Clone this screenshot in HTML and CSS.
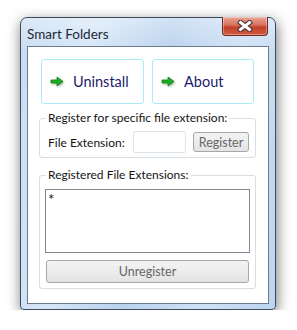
FILE: index.html
```html
<!DOCTYPE html>
<html lang="en">
<head>
  <meta charset="UTF-8">
  <title>Smart Folders</title>
  <link rel="stylesheet" href="styles.css">
</head>
<body>
  <div class="window">
    <div class="title-bar">
      <span class="title">Smart Folders</span>
      <button class="close-btn" aria-label="Close">
        <svg width="16" height="12" viewBox="0 0 16 12">
          <path d="M3.5 2.5 L12.5 9.5 M12.5 2.5 L3.5 9.5" stroke="#40302e" stroke-width="5" stroke-linecap="square"/>
          <path d="M3.5 2.5 L12.5 9.5 M12.5 2.5 L3.5 9.5" stroke="#ffffff" stroke-width="3" stroke-linecap="square"/>
        </svg>
      </button>
    </div>

    <div class="client">
      <div class="command-row">
        <button class="command-btn">
          <svg class="arrow" width="14" height="11" viewBox="0 0 14 11">
            <path d="M1 4 H7 V1 L13 5.5 L7 10 V7 H1 Z" fill="#1fae22" stroke="#138016" stroke-width="0.8"/>
          </svg>
          <span>Uninstall</span>
        </button>
        <button class="command-btn">
          <svg class="arrow" width="14" height="11" viewBox="0 0 14 11">
            <path d="M1 4 H7 V1 L13 5.5 L7 10 V7 H1 Z" fill="#1fae22" stroke="#138016" stroke-width="0.8"/>
          </svg>
          <span>About</span>
        </button>
      </div>

      <fieldset class="group group-register">
        <legend>Register for specific file extension:</legend>
        <div class="ext-row">
          <label for="ext">File Extension:</label>
          <input type="text" id="ext" class="ext-input">
          <button class="win-btn register-btn">Register</button>
        </div>
      </fieldset>

      <fieldset class="group group-list">
        <legend>Registered File Extensions:</legend>
        <div class="listbox">
          <div class="list-item">*</div>
        </div>
        <button class="win-btn unregister-btn">Unregister</button>
      </fieldset>
    </div>
  </div>
</body>
</html>
```

FILE: styles.css
```css
* {
  margin: 0;
  padding: 0;
  box-sizing: border-box;
}

body {
  background: #ffffff;
  font-family: Lato, "Noto Sans", sans-serif;
  font-size: 12px;
  color: #141414;
  padding: 17px 0 0 20px;
}

.window {
  position: relative;
  width: 256px;
  height: 293px;
  padding: 0 6px 5px 6px;
  border: 1px solid #3c4b5e;
  border-radius: 7px 7px 4px 4px;
  background:
    linear-gradient(180deg, rgba(255, 255, 255, 0.35) 0%, rgba(255, 255, 255, 0) 12%),
    linear-gradient(100deg, #c8dcf2 0%, #d6e6f7 25%, #b9d2ee 50%, #cfe1f5 75%, #bcd4ef 100%);
  box-shadow: 1px 4px 14px rgba(0, 0, 0, 0.55);
  display: flex;
  flex-direction: column;
}

.title-bar {
  height: 28px;
  display: flex;
  align-items: center;
}

.title {
  margin-top: 3px;
  font-size: 13.5px;
  color: #1e2a3a;
}

.close-btn {
  position: absolute;
  top: -1px;
  right: 7px;
  width: 46px;
  height: 19px;
  border: 1px solid #6e2a22;
  border-top: none;
  border-radius: 0 0 4px 4px;
  background: linear-gradient(180deg, #e9a597 0%, #d9715e 45%, #c2412a 55%, #d1583e 100%);
  box-shadow: inset 0 0 0 1px rgba(255, 255, 255, 0.35);
  display: flex;
  align-items: center;
  justify-content: center;
}

.client {
  flex: 1;
  background: #ffffff;
  border: 1px solid #6b7b8c;
  padding: 12px 12px 0 11px;
}

.command-row {
  display: flex;
  gap: 8px;
  padding-left: 2px;
}

.command-btn {
  width: 103px;
  height: 45px;
  border: 1px solid #a9ebf7;
  border-radius: 3px;
  background: #ffffff;
  display: flex;
  align-items: center;
  padding-left: 8px;
  gap: 9px;
  font-family: Lato, "Noto Sans", sans-serif;
  font-size: 14.5px;
  color: #1c1c6c;
}

.command-btn + .command-btn {
  width: 102px;
}

.arrow {
  filter: drop-shadow(1px 1px 1px rgba(0, 0, 0, 0.3));
}

.group {
  border: 1px solid #d5dfe5;
  border-radius: 3px;
  width: 217px;
}

.group legend {
  padding: 0 2px;
  line-height: 16px;
  white-space: nowrap;
}

.group-register {
  margin-top: 6px;
  padding: 5px 6px 4px 8px;
}

.group-register legend {
  margin-left: -2px;
}

.ext-row {
  display: flex;
  align-items: center;
}

.ext-row label {
  width: 85px;
}

.ext-input {
  width: 53px;
  height: 22px;
  border: 1px solid #dfe4e8;
  border-radius: 2px;
  outline: none;
}

.win-btn {
  border: 1px solid #a6a6a6;
  border-radius: 3px;
  background: linear-gradient(180deg, #f4f4f4 0%, #ececec 50%, #e3e3e3 100%);
  color: #666666;
  font-family: Lato, "Noto Sans", sans-serif;
  font-size: 12.5px;
}

.register-btn {
  margin-left: 7px;
  width: 56px;
  height: 20px;
}

.group-list {
  margin-top: 9px;
  padding: 6px 5px 5px 5px;
}

.group-list legend {
  margin-left: 1px;
}

.listbox {
  height: 64px;
  border: 1px solid #828790;
  padding: 3px 2px;
}

.list-item {
  font-size: 15px;
  line-height: 12px;
}

.unregister-btn {
  display: block;
  margin: 7px 1px 0 1px;
  width: 203px;
  height: 23px;
}
```
